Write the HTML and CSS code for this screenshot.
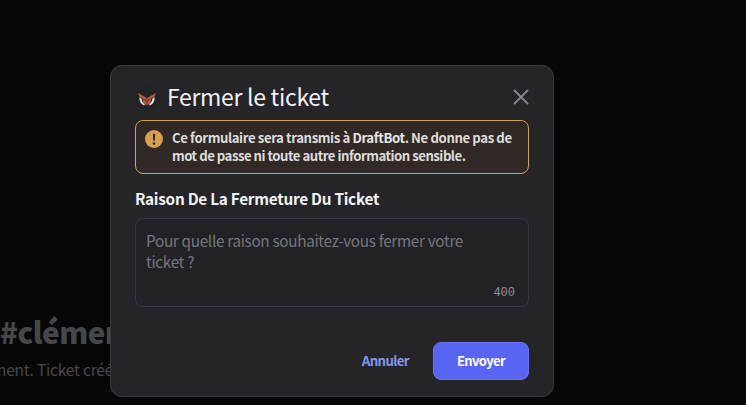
FILE: index.html
```html
<!DOCTYPE html>
<html lang="fr">
<head>
<meta charset="utf-8">
<title>Fermer le ticket</title>
<link rel="stylesheet" href="styles.css">
</head>
<body>
<div class="channel">
  <h2 class="channel-name">#clémer</h2>
  <p class="channel-text">ment. Ticket créé</p>
</div>
<div class="modal" role="dialog">
  <header class="header">
    <svg class="logo" viewBox="0 0 24 24">
      <circle cx="12" cy="12" r="12" fill="#222327"/>
      <path d="M4.300 11.200c0 4 1.600 7 5 8.200l.5-1.500c-2.100-1.200-3-3-3.300-5.400zM19.700 11.200c0 4-1.600 7-5 8.200l-.5-1.500c2.100-1.200 3-3 3.300-5.400z" fill="#e6e2df"/>
      <path d="M3 6.700l6.900 4.200 2.100 1.300 2.100-1.300L21 6.700l-1.400 4-3.300 1.500-.9 5L12 19.200l-3.400-1.900-.9-5-3.300-1.500z" fill="#bb5a43"/>
      <path d="M8.500 13.200l2.100.6v1.800M15.500 13.200l-2.100.6v1.800M12 12.300v6" fill="none" stroke="#5d302b" stroke-width=".8"/>
    </svg>
    <h1 class="title">Fermer le ticket</h1>
    <svg class="close" viewBox="0 0 16 16"><path d="M1.500 1.500l13 13M14.500 1.500l-13 13"/></svg>
  </header>
  <div class="notice">
    <svg class="warn" viewBox="0 0 18 18"><circle cx="9" cy="9" r="9" fill="#d9a055"/><path d="M7.800 3.800h2.400l-.4 6.900H8.200z" fill="#302925"/><circle cx="9" cy="13.500" r="1.250" fill="#302925"/></svg>
    <p class="notice-text">Ce formulaire sera transmis à <b>DraftBot</b>. Ne donne pas de<br><span class="notice-end">mot de passe ni toute autre information sensible.</span></p>
  </div>
  <h3 class="label">Raison De La Fermeture Du Ticket</h3>
  <div class="field">
    <p class="placeholder">Pour quelle raison souhaitez-vous fermer votre<br>ticket ?</p>
    <span class="count">400</span>
  </div>
  <footer class="footer">
    <span class="cancel">Annuler</span>
    <button class="submit">Envoyer</button>
  </footer>
</div>
</body>
</html>
```
FILE: styles.css
```css
* { box-sizing: border-box; margin: 0; padding: 0; }
body {
  width: 746px; height: 405px; overflow: hidden;
  background: #070708;
  font-family: "Noto Sans CJK JP", "Noto Sans", sans-serif;
  white-space: nowrap;
  display: grid;
}
.channel, .modal { grid-area: 1 / 1; }
.channel { padding-top: 311px; color: #47474a; }
.channel-name { font-size: 29.5px; line-height: 40px; font-weight: 900; margin-left: 0; letter-spacing: -0.5px; }
.channel-text { font-size: 15.5px; line-height: 22px; margin: 7px 0 0 -8px; letter-spacing: -0.2px; }
.modal {
  width: 444px; height: 332px; margin: 65px 0 0 110px;
  padding: 0 24px;
  position: relative;
  background: #252429; border: 1px solid #3b3a40; border-radius: 12px;
  display: flex; flex-direction: column;
}
.header { height: 54px; padding-top: 8px; display: flex; align-items: center; }
.logo { width: 24px; height: 24px; margin-top: 1px; }
.title { font-size: 23px; line-height: 32px; font-weight: 400; color: #f2f2f4; margin: -2px 0 0 8px; letter-spacing: -0.3px; }
.close { width: 16px; height: 16px; margin-left: auto; stroke: #85858a; stroke-width: 2; fill: none; stroke-linecap: round; }
.notice {
  height: 54px; padding: 9px 8px; display: flex; gap: 9px;
  border: 1px solid #d9a055; border-radius: 8px; background: #302925;
}
.warn { flex: none; width: 18px; height: 18px; margin-left: 1px; }
.notice-text { font-size: 13.2px; line-height: 18px; font-weight: 600; color: #dedcdc; margin-top: -1px; letter-spacing: -0.4px; }
.notice-text b { font-weight: 700; color: #e8e6e5; }
.notice-end { letter-spacing: -0.5px; }
.label { margin-top: 13px; font-size: 15.3px; line-height: 22px; font-weight: 600; color: #f4f4f5; letter-spacing: -0.25px; }
.field { margin-top: 9px; height: 89px; border: 1px solid #39383e; border-radius: 8px; background: #222126; padding: 11px 13px 5px 10px; display: flex; flex-direction: column; justify-content: space-between; }
.placeholder { font-size: 15.3px; line-height: 21px; color: #77777d; letter-spacing: -0.32px; }
.count { align-self: flex-end; font: 12px/16px "Liberation Mono", monospace; color: #929298; }
.footer { margin-top: 35px; display: flex; justify-content: flex-end; align-items: center; gap: 24px; }
.cancel { font-size: 13.3px; line-height: 20px; font-weight: 600; color: #8299ee; letter-spacing: -0.65px; }
.submit { width: 96px; height: 38px; border: 1px solid #6a74f5; border-radius: 8px; background: #5865f2; color: #fff; font: 600 13px "Noto Sans CJK JP", "Noto Sans", sans-serif; letter-spacing: -0.6px; padding-bottom: 1px; }
```
